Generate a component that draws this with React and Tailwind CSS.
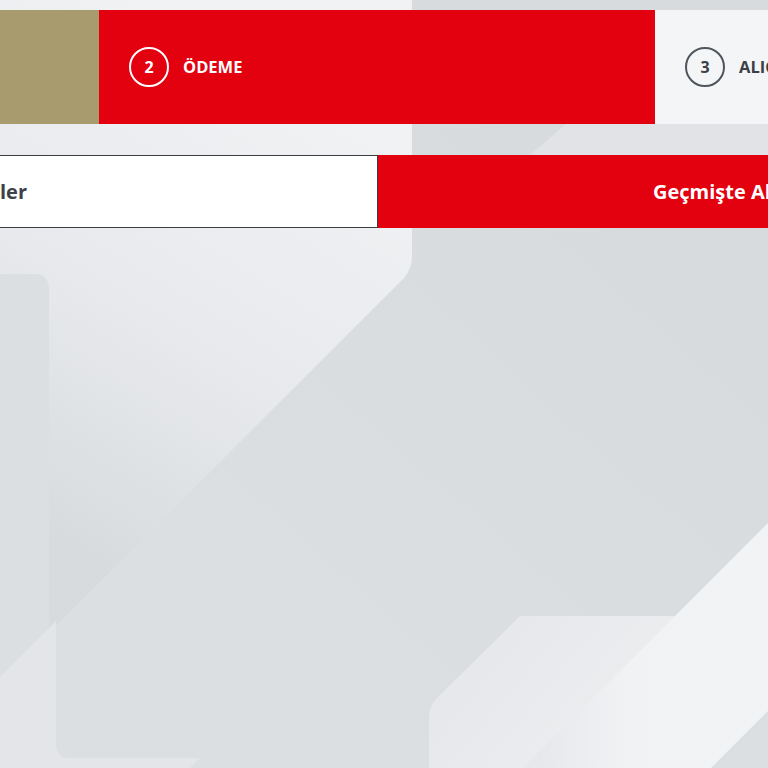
import React from "react";

function Background() {
  return (
    <svg viewBox="0 0 768 768" className="absolute inset-0 w-full h-full" preserveAspectRatio="none">
      <defs>
        <linearGradient id="gA" x1="360" y1="120" x2="90" y2="560" gradientUnits="userSpaceOnUse">
          <stop offset="0" stopColor="#f1f2f4" />
          <stop offset="0.55" stopColor="#e7e9ec" />
          <stop offset="1" stopColor="#d8dbde" />
        </linearGradient>
        <linearGradient id="gB" x1="440" y1="620" x2="620" y2="768" gradientUnits="userSpaceOnUse">
          <stop offset="0" stopColor="#e4e6e9" />
          <stop offset="1" stopColor="#eceef0" />
        </linearGradient>
        <linearGradient id="gC" x1="540" y1="0" x2="720" y2="0" gradientUnits="userSpaceOnUse">
          <stop offset="0" stopColor="#e6e8eb" />
          <stop offset="0.5" stopColor="#f1f2f4" />
          <stop offset="1" stopColor="#f2f3f5" />
        </linearGradient>
        <linearGradient id="gBase" x1="300" y1="700" x2="700" y2="250" gradientUnits="userSpaceOnUse">
          <stop offset="0" stopColor="#dcdfe2" />
          <stop offset="1" stopColor="#d8dbde" />
        </linearGradient>
      </defs>
      <rect width="768" height="768" fill="url(#gBase)" />
      <path d="M530 155 L566 124 H768 V155 Z" fill="#e1e3e6" />
      <path d="M0 0 H412 V256 Q412 268 404 278 L0 682 Z" fill="url(#gA)" />
      <path d="M0 274 H35 Q49 274 49 290 V628 L0 677 Z" fill="#dcdfe2" />
      <path d="M0 677 L56 621 V744 Q56 758 70 758 H200 L190 768 H0 Z" fill="#e3e5e8" />
      <path d="M429 768 V718 Q429 706 437 698 L520 616 H690 L768 540 V768 Z" fill="url(#gB)" />
      <path d="M768 523 L523 768 H711 L768 711 Z" fill="url(#gC)" />
      <path d="M768 711 L711 768 H768 Z" fill="#dcdfe2" />
    </svg>
  );
}

function Step({ n, label, bg, active, done }) {
  const circle = active || done ? "border-white text-white" : "border-[#50555b] text-[#3b4047]";
  const text = active || done ? "text-white" : "text-[#3b4047]";
  return (
    <div className={`w-[556px] shrink-0 flex items-center pl-[30px] gap-[14px] ${bg}`}>
      <div className={`w-[40px] h-[40px] rounded-full border-2 flex items-center justify-center text-[16px] font-bold ${circle}`}>
        {n}
      </div>
      <span className={`text-[16.5px] font-bold uppercase ${text}`}>{label}</span>
    </div>
  );
}

export default function App() {
  return (
    <div className="relative w-[768px] h-[768px] overflow-hidden font-['Open_Sans',sans-serif]">
      <Background />
      <div className="relative pt-[10px] flex flex-col">
        <div className="flex h-[114px] -ml-[457px]">
          <Step n="1" label="KATEGORİ SEÇİMİ" bg="bg-[#a89b6d]" done />
          <Step n="2" label="ÖDEME" bg="bg-[#e3000f]" active />
          <Step n="3" label="ALICI BİLGİLERİ" bg="bg-[#f4f5f7]" />
        </div>
        <div className="flex h-[73px] mt-[31px] -ml-[362px]">
          <div className="w-[740px] shrink-0 bg-white border border-[#3a3d42] flex items-center justify-end pr-[350px]">
            <span className="text-[20px] font-bold text-[#3d4248] whitespace-nowrap">Etkinlikler</span>
          </div>
          <div className="w-[740px] shrink-0 bg-[#e3000f] flex items-center pl-[275px]">
            <span className="text-[20px] font-bold text-white whitespace-nowrap">Geçmişte Aldıklarım</span>
          </div>
        </div>
      </div>
    </div>
  );
}
